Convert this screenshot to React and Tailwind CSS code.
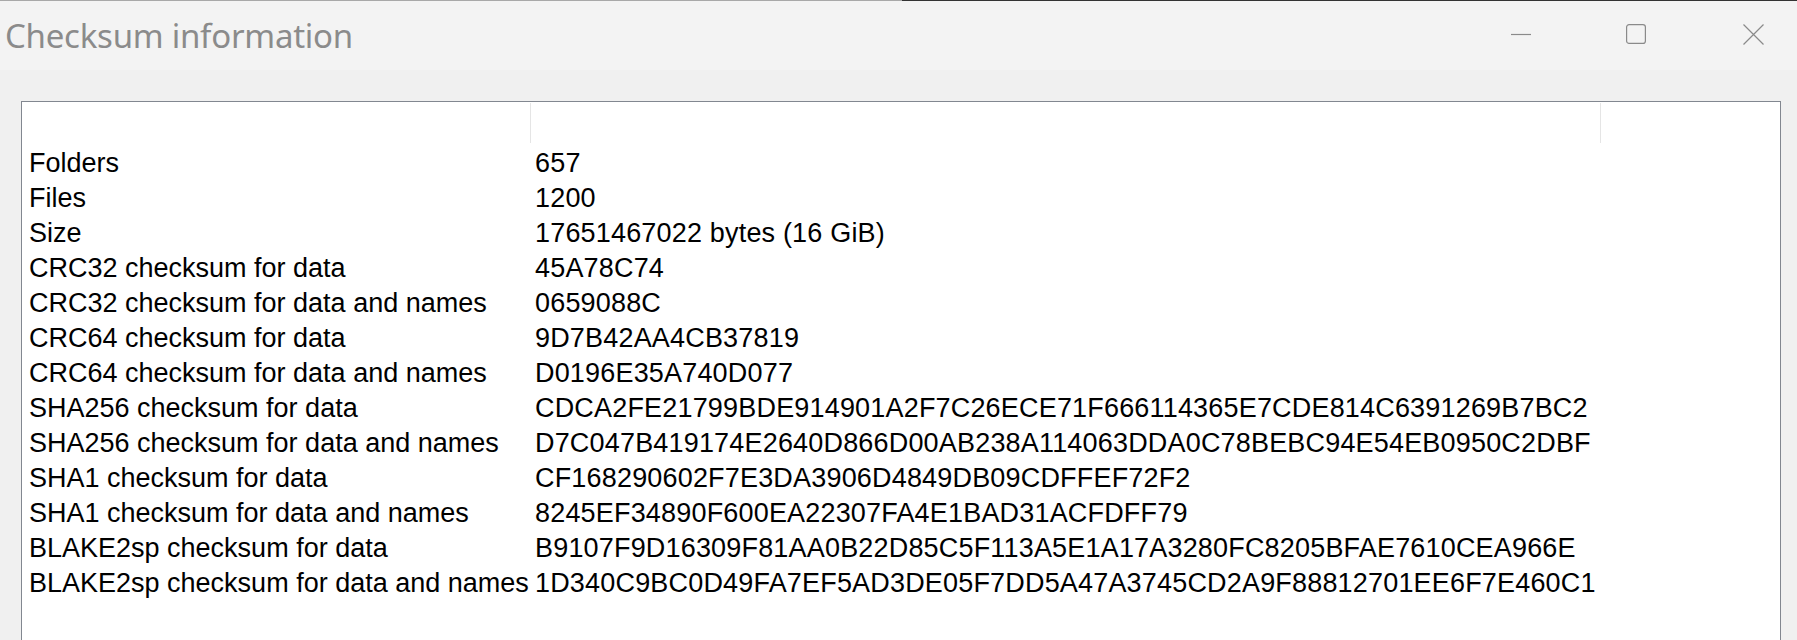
import React from "react";

const rows = [
  ["Folders", "657"],
  ["Files", "1200"],
  ["Size", "17651467022 bytes (16 GiB)"],
  ["CRC32 checksum for data", "45A78C74"],
  ["CRC32 checksum for data and names", "0659088C"],
  ["CRC64 checksum for data", "9D7B42AA4CB37819"],
  ["CRC64 checksum for data and names", "D0196E35A740D077"],
  ["SHA256 checksum for data", "CDCA2FE21799BDE914901A2F7C26ECE71F666114365E7CDE814C6391269B7BC2"],
  ["SHA256 checksum for data and names", "D7C047B419174E2640D866D00AB238A114063DDA0C78BEBC94E54EB0950C2DBF"],
  ["SHA1 checksum for data", "CF168290602F7E3DA3906D4849DB09CDFFEF72F2"],
  ["SHA1 checksum for data and names", "8245EF34890F600EA22307FA4E1BAD31ACFDFF79"],
  ["BLAKE2sp checksum for data", "B9107F9D16309F81AA0B22D85C5F113A5E1A17A3280FC8205BFAE7610CEA966E"],
  ["BLAKE2sp checksum for data and names", "1D340C9BC0D49FA7EF5AD3DE05F7DD5A47A3745CD2A9F88812701EE6F7E460C1"],
];

export default function App() {
  return (
    <div className="w-[1797px] h-[640px] overflow-hidden bg-[#f0f0f0] flex flex-col">
      {/* top edge */}
      <div className="flex h-[1px] shrink-0">
        <div className="w-[902px] bg-[#a8a8a8]" />
        <div className="flex-1 bg-[#333333]" />
      </div>
      {/* title bar */}
      <div className="h-[69px] shrink-0 bg-[#f3f3f3] flex items-start">
        <div
          className="pl-[5px] pt-[15px] text-[33px] leading-[40px] tracking-[-0.25px] text-[#8b8b8b] whitespace-nowrap"
          style={{ fontFamily: '"Segoe UI", "Noto Sans", sans-serif' }}
        >
          Checksum information
        </div>
        <div className="ml-auto flex items-start pt-[23px] pr-[33px]">
          <svg width="20" height="20" viewBox="0 0 20 20" className="mr-[95px]">
            <line x1="0" y1="10.5" x2="20" y2="10.5" stroke="#8a8a8a" strokeWidth="1.2" />
          </svg>
          <svg width="20" height="20" viewBox="0 0 20 20" className="mr-[97px]">
            <rect x="0.6" y="0.6" width="18.8" height="18.8" rx="2.5" fill="none" stroke="#8a8a8a" strokeWidth="1.2" />
          </svg>
          <svg width="21" height="21" viewBox="0 0 21 21">
            <path d="M0.5 0.5 L20.5 20.5 M20.5 0.5 L0.5 20.5" stroke="#8a8a8a" strokeWidth="1.2" />
          </svg>
        </div>
      </div>
      {/* list box */}
      <div className="pt-[31px] pl-[21px] flex-1">
        <div className="w-[1760px] h-[600px] bg-white border border-[#828790]">
          <div className="h-[44px] flex pt-[1px]">
            <div className="w-[509px] h-[40px] border-r border-[#e5e5e5]" />
            <div className="w-[1070px] h-[40px] border-r border-[#e5e5e5]" />
          </div>
          <div
            className="text-[27px] leading-[35px] text-black"
            style={{ fontFamily: '"Liberation Sans", Arial, sans-serif' }}
          >
            {rows.map(([k, v]) => (
              <div key={k} className="flex whitespace-nowrap">
                <div className="w-[509px] shrink-0 pl-[7px]">{k}</div>
                <div className="pl-[4px] tracking-[0.18px]">{v}</div>
              </div>
            ))}
          </div>
        </div>
      </div>
    </div>
  );
}
